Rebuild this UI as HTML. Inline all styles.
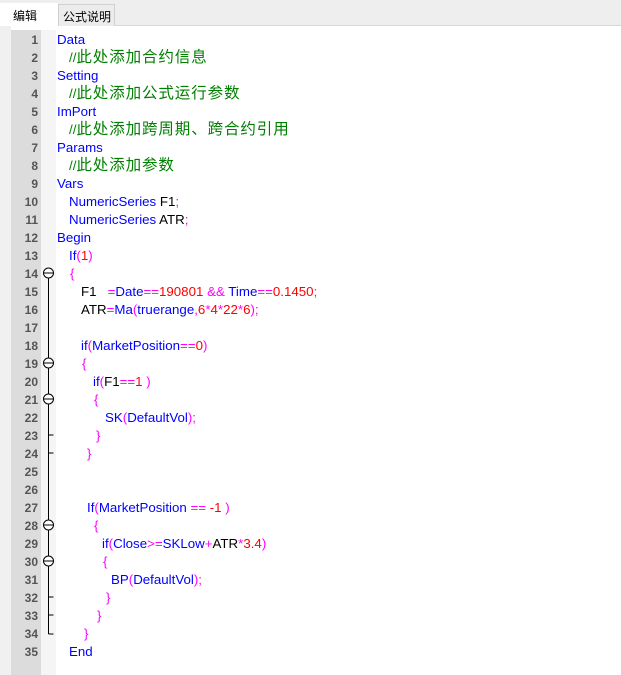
<!DOCTYPE html>
<html><head><meta charset="utf-8"><style>
*{margin:0;padding:0;box-sizing:border-box}
body{width:621px;height:675px;overflow:hidden;background:#fff;position:relative;font-family:"Liberation Sans","Noto Sans CJK SC",sans-serif}
.tabbar{position:absolute;left:0;top:0;width:621px;height:26px;background:#eeeeee;border-bottom:1px solid #d8d8d8}
.t1{position:absolute;left:0;top:3px;width:58px;height:23px;background:#fff;font-size:12px;padding:4px 0 0 13px;color:#000}
.t2{position:absolute;left:58px;top:4px;width:57px;height:22px;background:#ececec;border:1px solid #d0d0d0;border-bottom:none;font-size:12px;padding:3px 0 0 4px}
.strip{position:absolute;left:0;top:26px;width:11px;height:649px;background:#f0f0f0}
.gut{position:absolute;left:11px;top:30px;width:30px;height:645px;background:#dcdcdc}
.mar{position:absolute;left:41px;top:30px;width:15px;height:645px;background:#f5f5f5}
.n{position:absolute;left:11px;width:27px;text-align:right;font-size:12px;font-weight:bold;color:#555;height:18px;line-height:18px;margin-top:1px}
.l{position:absolute;white-space:pre;font-size:13.3px;height:18px;line-height:18px;color:#000;margin-top:1px}
.c{font-size:15.5px;letter-spacing:0.9px}
.b{color:#0000ff}.g{color:#008000}.m{color:#ff00ff}.r{color:#ff0000}.k{color:#000}
svg{position:absolute;left:0;top:0}
</style></head><body>
<div class="tabbar"><div class="t1">编辑</div><div class="t2">公式说明</div></div>
<div class="strip"></div><div class="gut"></div><div class="mar"></div>
<div class="n" style="top:30px">1</div><div class="n" style="top:48px">2</div><div class="n" style="top:66px">3</div><div class="n" style="top:84px">4</div><div class="n" style="top:102px">5</div><div class="n" style="top:120px">6</div><div class="n" style="top:138px">7</div><div class="n" style="top:156px">8</div><div class="n" style="top:174px">9</div><div class="n" style="top:192px">10</div><div class="n" style="top:210px">11</div><div class="n" style="top:228px">12</div><div class="n" style="top:246px">13</div><div class="n" style="top:264px">14</div><div class="n" style="top:282px">15</div><div class="n" style="top:300px">16</div><div class="n" style="top:318px">17</div><div class="n" style="top:336px">18</div><div class="n" style="top:354px">19</div><div class="n" style="top:372px">20</div><div class="n" style="top:390px">21</div><div class="n" style="top:408px">22</div><div class="n" style="top:426px">23</div><div class="n" style="top:444px">24</div><div class="n" style="top:462px">25</div><div class="n" style="top:480px">26</div><div class="n" style="top:498px">27</div><div class="n" style="top:516px">28</div><div class="n" style="top:534px">29</div><div class="n" style="top:552px">30</div><div class="n" style="top:570px">31</div><div class="n" style="top:588px">32</div><div class="n" style="top:606px">33</div><div class="n" style="top:624px">34</div><div class="n" style="top:642px">35</div>
<svg width="621" height="675" fill="none" stroke="#000" stroke-width="1">
<path d="M48.5 278V634M48.5 368V453M48.5 404V435M48.5 530V615M48.5 566V597"/>
<path d="M48.5 435h5M48.5 453h5M48.5 597h5M48.5 615h5M48.5 634h5"/>
<g fill="#fff"><circle cx="48.5" cy="273" r="5"/><circle cx="48.5" cy="363" r="5"/><circle cx="48.5" cy="399" r="5"/><circle cx="48.5" cy="525" r="5"/><circle cx="48.5" cy="561" r="5"/></g>
<path d="M44 273h9M44 363h9M44 399h9M44 525h9M44 561h9"/>
</svg>
<div class="l b" style="left:57px;top:30px">Data</div>
<div class="l g" style="left:69px;top:48px">//<span class="c">此处添加合约信息</span></div>
<div class="l b" style="left:57px;top:66px">Setting</div>
<div class="l g" style="left:69px;top:84px">//<span class="c">此处添加公式运行参数</span></div>
<div class="l b" style="left:57px;top:102px">ImPort</div>
<div class="l g" style="left:69px;top:120px">//<span class="c">此处添加跨周期、跨合约引用</span></div>
<div class="l b" style="left:57px;top:138px">Params</div>
<div class="l g" style="left:69px;top:156px">//<span class="c">此处添加参数</span></div>
<div class="l b" style="left:57px;top:174px">Vars</div>
<div class="l b" style="left:69px;top:192px">NumericSeries <span class="k">F1</span><span class="m">;</span></div>
<div class="l b" style="left:69px;top:210px">NumericSeries <span class="k">ATR</span><span class="m">;</span></div>
<div class="l b" style="left:57px;top:228px">Begin</div>
<div class="l b" style="left:69px;top:246px">If<span class="m">(</span><span class="r">1</span><span class="m">)</span></div>
<div class="l m" style="left:70px;top:264px">{</div>
<div class="l k" style="left:81px;top:282px">F1   <span class="m">=</span><span class="b">Date</span><span class="m">==</span><span class="r">190801</span> <span class="m">&amp;&amp;</span> <span class="b">Time</span><span class="m">==</span><span class="r">0.1450</span><span class="m">;</span></div>
<div class="l k" style="left:81px;top:300px">ATR<span class="m">=</span><span class="b">Ma</span><span class="m">(</span><span class="b">truerange</span><span class="m">,</span><span class="r">6</span><span class="m">*</span><span class="r">4</span><span class="m">*</span><span class="r">22</span><span class="m">*</span><span class="r">6</span><span class="m">);</span></div>
<div class="l b" style="left:81px;top:336px">if<span class="m">(</span>MarketPosition<span class="m">==</span><span class="r">0</span><span class="m">)</span></div>
<div class="l m" style="left:82px;top:354px">{</div>
<div class="l b" style="left:93px;top:372px">if<span class="m">(</span><span class="k">F1</span><span class="m">==</span><span class="r">1</span> <span class="m">)</span></div>
<div class="l m" style="left:94px;top:390px">{</div>
<div class="l b" style="left:105px;top:408px">SK<span class="m">(</span>DefaultVol<span class="m">);</span></div>
<div class="l m" style="left:96px;top:426px">}</div>
<div class="l m" style="left:87px;top:444px">}</div>
<div class="l b" style="left:87px;top:498px">If<span class="m">(</span>MarketPosition <span class="m">==</span> <span class="r">-1</span> <span class="m">)</span></div>
<div class="l m" style="left:94px;top:516px">{</div>
<div class="l b" style="left:102px;top:534px">if<span class="m">(</span>Close<span class="m">&gt;=</span>SKLow<span class="m">+</span><span class="k">ATR</span><span class="m">*</span><span class="r">3.4</span><span class="m">)</span></div>
<div class="l m" style="left:103px;top:552px">{</div>
<div class="l b" style="left:111px;top:570px">BP<span class="m">(</span>DefaultVol<span class="m">);</span></div>
<div class="l m" style="left:106px;top:588px">}</div>
<div class="l m" style="left:97px;top:606px">}</div>
<div class="l m" style="left:84px;top:624px">}</div>
<div class="l b" style="left:69px;top:642px">End</div>
</body></html>
